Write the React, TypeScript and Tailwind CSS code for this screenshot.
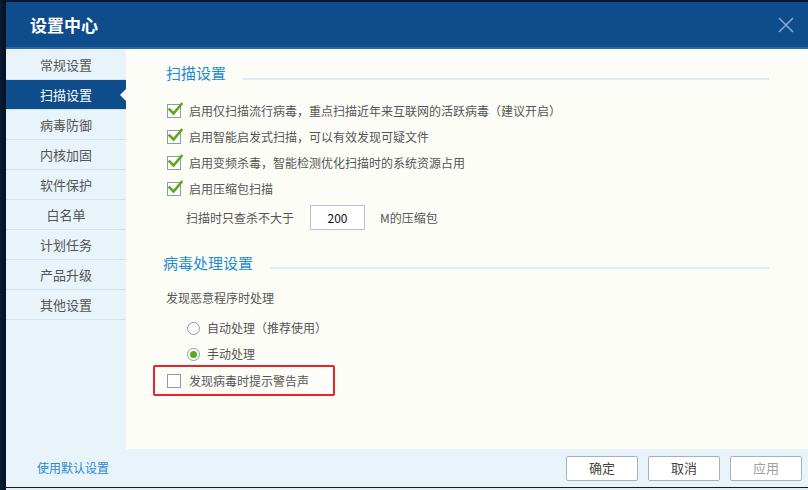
import React from "react";

const font = { fontFamily: '"Noto Sans CJK SC", "Noto Sans", sans-serif' };

function Check({ checked }: { checked: boolean }) {
  return (
    <span className="relative inline-block w-[14px] h-[14px] shrink-0">
      <span className="absolute inset-0 border border-[#8e9ba6] bg-white" />
      {checked && (
        <svg className="absolute left-[1px] top-[-2px]" width="15" height="15" viewBox="0 0 15 15">
          <path d="M1.5 7.5 L5.5 11.5 L13.5 2" fill="none" stroke="#5fa71c" strokeWidth="2.6" strokeLinecap="square" />
        </svg>
      )}
    </span>
  );
}

function Radio({ checked }: { checked: boolean }) {
  return (
    <span className="w-[13px] h-[13px] rounded-full border border-[#8e9ba6] bg-white flex items-center justify-center shrink-0">
      {checked && <span className="w-[7px] h-[7px] rounded-full bg-[#5fa71c]" />}
    </span>
  );
}

const navItems = ["常规设置", "扫描设置", "病毒防御", "内核加固", "软件保护", "白名单", "计划任务", "产品升级", "其他设置"];

export default function App() {
  return (
    <div className="w-[808px] h-[490px] flex bg-[#0b1a30] overflow-hidden" style={font}>
      <div className="w-[6px] bg-gradient-to-r from-[#0a1a33] to-[#071020]" />
      <div className="flex-1 flex flex-col">
        {/* title bar */}
        <div className="h-[49px] bg-[#0f4c8c] border-t-[2px] border-[#06162c] border-b-[2px] border-b-[#2c64a6] flex items-center justify-between pl-[24px] pr-[14px]">
          <span className="text-white text-[17px] font-bold leading-none">设置中心</span>
          <svg width="16" height="16" viewBox="0 0 16 16">
            <path d="M1 1 L15 15 M15 1 L1 15" stroke="#86a5cf" strokeWidth="1.6" />
          </svg>
        </div>
        {/* body */}
        <div className="h-[400px] flex">
          <div className="w-[120px] bg-[#e8f3fa] flex flex-col pt-[1px]">
            {navItems.map((t, i) => (
              <div
                key={t}
                className={
                  "relative h-[30px] flex items-center justify-center border-b border-[#d3e1eb] text-[13px] " +
                  (i === 1 ? "bg-[#0f4c8c] text-white" : "text-[#555]")
                }
              >
                {t}
                {i === 1 && (
                  <span className="absolute right-0 top-[9px] w-0 h-0 border-y-[6px] border-y-transparent border-r-[6px] border-r-white" />
                )}
              </div>
            ))}
          </div>
          <div className="flex-1 bg-[#fdfdf8] flex flex-col pl-[40px] pr-[39px] text-[12px] text-[#555]">
            <div className="mt-[14px] flex items-start">
              <span className="text-[15px] leading-[20px] text-[#1f8bd6]">扫描设置</span>
              <div className="flex-1 h-[2px] bg-[#e0ebf6] mt-[15px] ml-[17px]" />
            </div>
            <div className="mt-[15px] flex flex-col">
              {[
                "启用仅扫描流行病毒，重点扫描近年来互联网的活跃病毒（建议开启）",
                "启用智能启发式扫描，可以有效发现可疑文件",
                "启用变频杀毒，智能检测优化扫描时的系统资源占用",
                "启用压缩包扫描",
              ].map((t) => (
                <div key={t} className="h-[26px] flex items-center gap-[8px] pl-[1px]">
                  <Check checked />
                  <span>{t}</span>
                </div>
              ))}
            </div>
            <div className="mt-[3px] h-[25px] flex items-center pl-[20px]">
              <span>扫描时只查杀不大于</span>
              <div className="ml-[16px] w-[55px] h-[25px] border border-[#b8c2ca] bg-white flex items-center justify-center text-[#111]">200</div>
              <span className="ml-[15px]">M的压缩包</span>
            </div>
            <div className="mt-[23px] flex items-start ml-[-3px]">
              <span className="text-[15px] leading-[20px] text-[#1f8bd6]">病毒处理设置</span>
              <div className="flex-1 h-[2px] bg-[#e0ebf6] mt-[14px] ml-[17px]" />
            </div>
            <div className="mt-[15px] h-[20px] flex items-center">发现恶意程序时处理</div>
            <div className="mt-[7px] flex flex-col pl-[21px]">
              <div className="h-[26px] flex items-center gap-[7px]">
                <Radio checked={false} />
                <span>自动处理（推荐使用）</span>
              </div>
              <div className="h-[26px] flex items-center gap-[7px]">
                <Radio checked />
                <span>手动处理</span>
              </div>
            </div>
            <div className="mt-[-2px] ml-[-13px] w-[182px] h-[31px] border-2 border-[#e8232b] rounded-[2px] flex items-center pl-[12px] gap-[8px]">
              <Check checked={false} />
              <span>发现病毒时提示警告声</span>
            </div>
          </div>
        </div>
        {/* bottom bar */}
        <div className="h-[38px] bg-[#e8f3fa] flex items-center pl-[31px] pr-[6px]">
          <span className="text-[12px] text-[#2a89d4]">使用默认设置</span>
          <div className="ml-auto flex gap-[10px]">
            {["确定", "取消", "应用"].map((b, i) => (
              <div
                key={b}
                className={
                  "w-[72px] h-[25px] bg-white border border-[#a9b1b8] rounded-[2px] flex items-center justify-center text-[13px] " +
                  (i === 2 ? "text-[#a0a0a0]" : "text-[#444]")
                }
              >
                {b}
              </div>
            ))}
          </div>
        </div>
        <div className="h-[1px] bg-[#1a1a1a]" />
        <div className="flex-1 bg-[#e6edf2]" />
      </div>
    </div>
  );
}
